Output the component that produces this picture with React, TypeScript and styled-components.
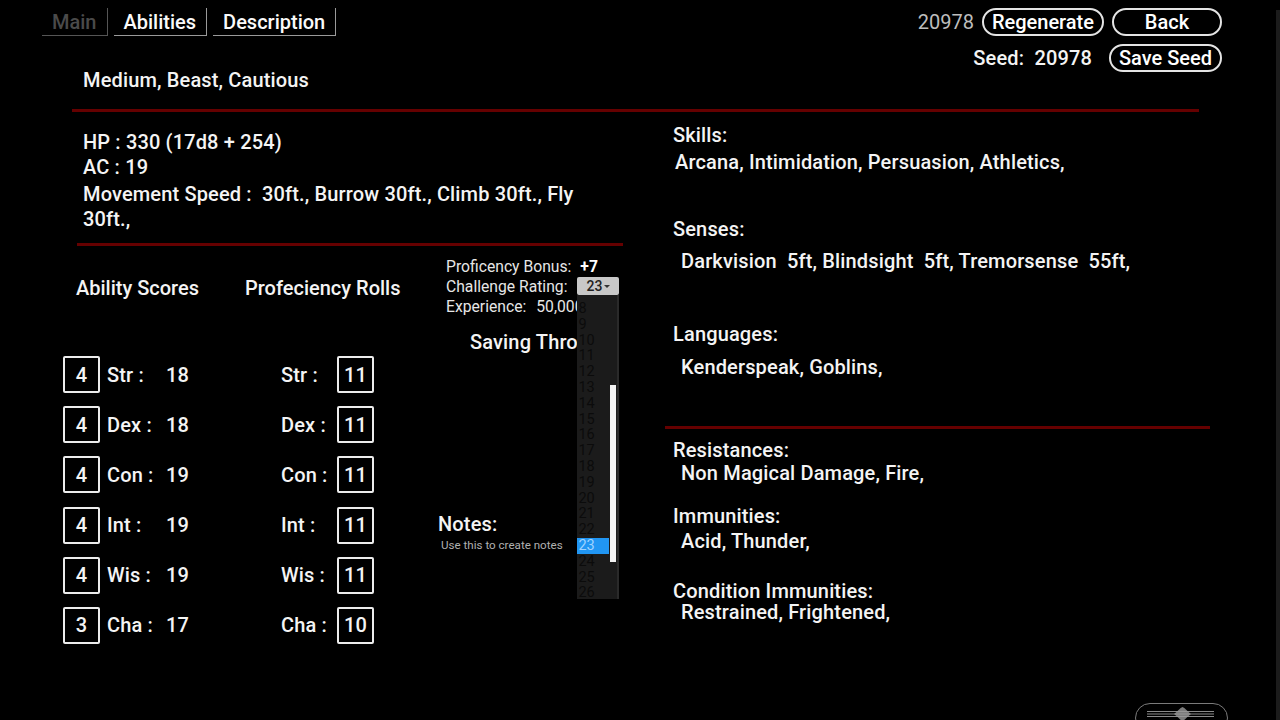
import React from "react";
import styled, { createGlobalStyle } from "styled-components";

const GlobalStyle = createGlobalStyle`
  html, body {
    margin: 0;
    padding: 0;
    background: #000;
  }
  body {
    font-family: Roboto, "Liberation Sans", Arial, sans-serif;
    color: #f4f4f4;
    letter-spacing: 0.15px;
  }
  * {
    box-sizing: border-box;
  }
`;

const abilities = [
  { key: "Str", mod: 4, score: 18, roll: 11 },
  { key: "Dex", mod: 4, score: 18, roll: 11 },
  { key: "Con", mod: 4, score: 19, roll: 11 },
  { key: "Int", mod: 4, score: 19, roll: 11 },
  { key: "Wis", mod: 4, score: 19, roll: 11 },
  { key: "Cha", mod: 3, score: 17, roll: 10 },
];

const crOptions = Array.from({ length: 19 }, (_, i) => i + 8);

export default function App() {
  return (
    <Page>
      <GlobalStyle />
      <Header>
        <HeaderLeft>
          <Tabs>
            <Tab $active>Main</Tab>
            <Tab>Abilities</Tab>
            <Tab>Description</Tab>
          </Tabs>
          <Subtitle>Medium, Beast, Cautious</Subtitle>
        </HeaderLeft>
        <HeaderRight>
          <HeaderRow>
            <SeedNumber>20978</SeedNumber>
            <Pill>Regenerate</Pill>
            <Pill $width={110}>Back</Pill>
          </HeaderRow>
          <HeaderRow $gap={17}>
            <SeedLabel>Seed:  20978</SeedLabel>
            <Pill>Save Seed</Pill>
          </HeaderRow>
        </HeaderRight>
      </Header>
      <TopDivider />
      <Body>
        <LeftCol>
          <Stats>
            <StatLine>HP : 330 (17d8 + 254)</StatLine>
            <StatLine>AC : 19</StatLine>
            <StatLine $top={2}>
              Movement Speed :{"\u00a0"} 30ft., Burrow 30ft., Climb 30ft., Fly 30ft.,
            </StatLine>
          </Stats>
          <StatDivider />
          <AbilitySection>
            <ScoreCol>
              <ColHeader $indent={13}>Ability Scores</ColHeader>
              <Rows>
                {abilities.map((a) => (
                  <AbilityRow key={a.key}>
                    <ScoreBox>{a.mod}</ScoreBox>
                    <AbilityLabel $width={59} $gap={7}>
                      {a.key} :
                    </AbilityLabel>
                    <span>{a.score}</span>
                  </AbilityRow>
                ))}
              </Rows>
            </ScoreCol>
            <ProfCol>
              <ColHeader>Profeciency Rolls</ColHeader>
              <Rows>
                {abilities.map((a) => (
                  <AbilityRow key={a.key} $indent={36}>
                    <AbilityLabel $width={56}>{a.key} :</AbilityLabel>
                    <ScoreBox>{a.roll}</ScoreBox>
                  </AbilityRow>
                ))}
              </Rows>
            </ProfCol>
            <SideCol>
              <InfoLine>
                Proficency Bonus:<InfoValue $gap={9}>+7</InfoValue>
              </InfoLine>
              <InfoLine>
                Challenge Rating:
                <CrSelect>
                  23
                  <Caret />
                  <CrList>
                    <CrItems>
                      {crOptions.map((n) => (
                        <CrItem key={n} $selected={n === 23}>
                          {n}
                        </CrItem>
                      ))}
                    </CrItems>
                    <CrTrack>
                      <CrThumb />
                    </CrTrack>
                  </CrList>
                </CrSelect>
              </InfoLine>
              <InfoLine>
                Experience:<PlainValue>50,000</PlainValue>
              </InfoLine>
              <SavingHeader>Saving Throws</SavingHeader>
              <NotesHeader>Notes:</NotesHeader>
              <NotesHint>Use this to create notes</NotesHint>
            </SideCol>
          </AbilitySection>
        </LeftCol>
        <RightCol>
          <Field $top={11} $gap={3} $indent={2}>
            <FieldLabel>Skills:</FieldLabel>
            <FieldValue>Arcana, Intimidation, Persuasion, Athletics,</FieldValue>
          </Field>
          <Field $top={43} $gap={8}>
            <FieldLabel>Senses:</FieldLabel>
            <FieldValue>Darkvision  5ft, Blindsight  5ft, Tremorsense  55ft,</FieldValue>
          </Field>
          <Field $top={49} $gap={9}>
            <FieldLabel>Languages:</FieldLabel>
            <FieldValue>Kenderspeak, Goblins,</FieldValue>
          </Field>
          <SectionDivider />
          <Field $top={9} $gap={-1}>
            <FieldLabel>Resistances:</FieldLabel>
            <FieldValue>Non Magical Damage, Fire,</FieldValue>
          </Field>
          <Field $top={19} $gap={1}>
            <FieldLabel>Immunities:</FieldLabel>
            <FieldValue>Acid, Thunder,</FieldValue>
          </Field>
          <Field $top={26} $gap={-3}>
            <FieldLabel>Condition Immunities:</FieldLabel>
            <FieldValue>Restrained, Frightened,</FieldValue>
          </Field>
        </RightCol>
      </Body>
      <EdgeBar />
      <NavHandle>
        <svg width="93" height="16" viewBox="0 0 93 16">
          <g stroke="#8a8a8a" strokeWidth="1.2">
            <line x1="11" y1="6.5" x2="78" y2="6.5" />
            <line x1="11" y1="9" x2="78" y2="9" />
            <line x1="11" y1="11.5" x2="78" y2="11.5" />
          </g>
          <path
            d="M38 9 C42 6 44 3 46.5 2 C49 3 51 6 55 9 C51 12 49 15 46.5 16 C44 15 42 12 38 9 Z"
            fill="#9a9a9a"
            opacity="0.8"
          />
        </svg>
      </NavHandle>
    </Page>
  );
}

const Page = styled.div`
  position: relative;
  width: 1280px;
  height: 720px;
  overflow: hidden;
  background: #000;
`;

const Header = styled.header`
  display: flex;
  justify-content: space-between;
  align-items: flex-start;
  padding: 8px 58px 0 42px;
`;

const HeaderLeft = styled.div`
  display: flex;
  flex-direction: column;
`;

const Tabs = styled.nav`
  display: flex;
  gap: 6px;
`;

const Tab = styled.div<{ $active?: boolean }>`
  height: 28px;
  padding: 0 10px;
  font-size: 20px;
  font-weight: 500;
  letter-spacing: 0;
  line-height: 28px;
  color: ${(p) => (p.$active ? "#4a4a4a" : "#fafafa")};
  border-right: 1.5px solid ${(p) => (p.$active ? "#555" : "#9a9a9a")};
  border-bottom: 1.5px solid ${(p) => (p.$active ? "#555" : "#9a9a9a")};
`;

const Subtitle = styled.div`
  margin-top: 32px;
  padding-left: 41px;
  font-size: 20px;
  font-weight: 500;
  line-height: 24px;
`;

const HeaderRight = styled.div`
  display: flex;
  flex-direction: column;
  align-items: flex-end;
  gap: 8px;
`;

const HeaderRow = styled.div<{ $gap?: number }>`
  display: flex;
  align-items: center;
  gap: ${(p) => p.$gap ?? 8}px;
`;

const SeedNumber = styled.span`
  font-size: 20px;
  color: #bdbdbd;
  letter-spacing: 0;
  line-height: 24px;
`;

const SeedLabel = styled.span`
  font-size: 20px;
  font-weight: 500;
  white-space: pre;
  line-height: 24px;
`;

const Pill = styled.div<{ $width?: number }>`
  height: 28px;
  ${(p) => (p.$width ? `width: ${p.$width}px;` : "")}
  padding: 0 8px;
  border: 2px solid #e4e4e4;
  border-radius: 14px;
  font-size: 20px;
  font-weight: 500;
  letter-spacing: 0;
  line-height: 24px;
  text-align: center;
  color: #fff;
`;

const RedLine = styled.div`
  height: 3px;
  background: #650000;
`;

const TopDivider = styled(RedLine)`
  margin: 17px 81px 0 72px;
`;

const Body = styled.main`
  display: grid;
  grid-template-columns: 567px 545px;
  column-gap: 35px;
  padding-left: 63px;
`;

const LeftCol = styled.section`
  padding-top: 18px;
`;

const Stats = styled.div`
  width: 540px;
  padding-left: 20px;
`;

const StatLine = styled.div<{ $top?: number }>`
  margin-top: ${(p) => p.$top ?? 0}px;
  font-size: 20px;
  font-weight: 500;
  line-height: 25px;
`;

const StatDivider = styled(RedLine)`
  margin: 11px 7px 0 14px;
`;

const AbilitySection = styled.div`
  display: flex;
`;

const ScoreCol = styled.div`
  width: 182px;
  padding-top: 30px;
`;

const ProfCol = styled.div`
  width: 193px;
  padding-top: 30px;
`;

const ColHeader = styled.div<{ $indent?: number }>`
  padding-left: ${(p) => p.$indent ?? 0}px;
  font-size: 20px;
  font-weight: 500;
  letter-spacing: 0;
  line-height: 24px;
`;

const Rows = styled.div`
  display: flex;
  flex-direction: column;
  gap: 13.2px;
  margin-top: 56px;
`;

const AbilityRow = styled.div<{ $indent?: number }>`
  display: flex;
  align-items: center;
  height: 37px;
  padding-left: ${(p) => p.$indent ?? 0}px;
  font-size: 20px;
  font-weight: 500;
`;

const ScoreBox = styled.div`
  display: flex;
  align-items: center;
  justify-content: center;
  width: 37px;
  height: 37px;
  border: 2px solid #ececec;
  border-radius: 2px;
  font-size: 20px;
  font-weight: 500;
`;

const AbilityLabel = styled.span<{ $width: number; $gap?: number }>`
  width: ${(p) => p.$width}px;
  margin-left: ${(p) => p.$gap ?? 0}px;
`;

const SideCol = styled.div`
  flex: 1;
  padding-top: 10px;
`;

const InfoLine = styled.div`
  display: flex;
  align-items: center;
  height: 20px;
  padding-left: 8px;
  font-size: 15.7px;
  letter-spacing: 0;
  color: #e6e6e6;
  white-space: nowrap;
`;

const InfoValue = styled.span<{ $gap: number }>`
  margin-left: ${(p) => p.$gap}px;
  font-weight: 700;
  color: #fff;
`;

const PlainValue = styled.span`
  margin-left: 10px;
`;

const CrSelect = styled.div`
  position: relative;
  display: flex;
  align-items: center;
  justify-content: center;
  gap: 2px;
  width: 42px;
  height: 18px;
  margin-left: 10px;
  background: #c8c8c8;
  border-radius: 2px;
  font-size: 14px;
  font-weight: 500;
  color: #222;
`;

const Caret = styled.span`
  width: 0;
  height: 0;
  border-left: 3px solid transparent;
  border-right: 3px solid transparent;
  border-top: 3px solid #333;
`;

const CrList = styled.div`
  position: absolute;
  top: 18px;
  left: 0;
  z-index: 2;
  display: flex;
  width: 42px;
  height: 304px;
  overflow: hidden;
  background: #1b1b1b;
`;

const CrItems = styled.div`
  width: 32px;
  padding-top: 6px;
`;

const CrItem = styled.div<{ $selected?: boolean }>`
  height: 15.8px;
  padding-left: 1px;
  font-size: 14.5px;
  font-weight: 400;
  line-height: 15.8px;
  color: ${(p) => (p.$selected ? "#9fd3ff" : "#0b0b0b")};
  background: ${(p) => (p.$selected ? "#2196f3" : "transparent")};
`;

const CrTrack = styled.div`
  width: 10px;
  padding: 90px 2px 0 1px;
  border-right: 2px solid #2a2a2a;
`;

const CrThumb = styled.div`
  width: 6px;
  height: 177px;
  background: #f3f3f3;
`;

const SavingHeader = styled.div`
  margin-top: 14px;
  padding-left: 32px;
  font-size: 20px;
  font-weight: 500;
  line-height: 24px;
  white-space: nowrap;
`;

const NotesHeader = styled.div`
  margin-top: 158px;
  font-size: 20px;
  font-weight: 500;
  line-height: 24px;
`;

const NotesHint = styled.div`
  padding-left: 3px;
  font-size: 11.6px;
  letter-spacing: 0;
  line-height: 18px;
  color: #b0b0b0;
`;

const RightCol = styled.section`
  display: flex;
  flex-direction: column;
`;

const Field = styled.div<{ $top: number; $gap: number; $indent?: number }>`
  display: flex;
  flex-direction: column;
  margin-top: ${(p) => p.$top}px;
  padding-left: 8px;
  font-size: 20px;
  font-weight: 500;
  line-height: 24px;

  & > span {
    margin-top: ${(p) => p.$gap}px;
    padding-left: ${(p) => p.$indent ?? 8}px;
  }
`;

const FieldLabel = styled.div``;

const FieldValue = styled.span`
  white-space: pre;
`;

const SectionDivider = styled(RedLine)`
  margin-top: 47px;
`;

const EdgeBar = styled.div`
  position: absolute;
  top: 10px;
  right: 0;
  bottom: 0;
  width: 4px;
  background: #1c1c1c;
`;

const NavHandle = styled.div`
  position: absolute;
  left: 1135px;
  top: 703px;
  width: 93px;
  height: 30px;
  border: 1.5px solid #7a7a7a;
  border-radius: 15px;
  padding-top: 1px;
`;
